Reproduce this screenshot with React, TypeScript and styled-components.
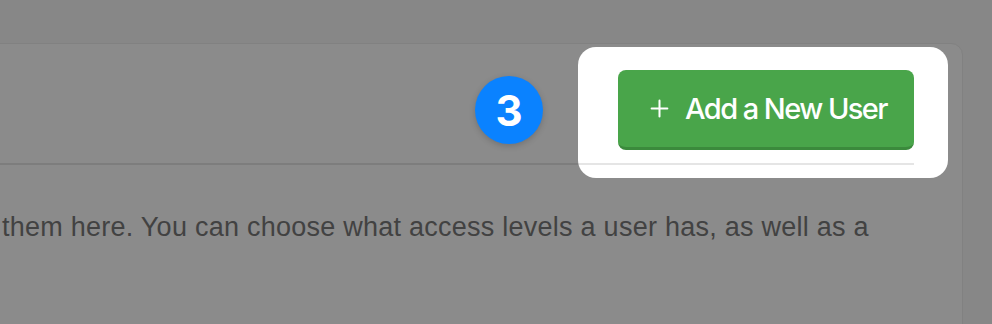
import React from "react";
import styled, { createGlobalStyle } from "styled-components";
import { Plus } from "lucide-react";

const GlobalStyle = createGlobalStyle`
  html, body {
    margin: 0;
    padding: 0;
    background: #f7f7f7;
    overflow: hidden;
  }
  body {
    font-family: Inter, "Liberation Sans", Arial, sans-serif;
  }
`;

const Page = styled.div`
  height: 324px;
  padding-top: 43px;
  box-sizing: border-box;
  overflow: hidden;
`;

const Card = styled.section`
  margin-left: -60px;
  width: 1023px;
  height: 320px;
  background: #ffffff;
  border: 1px solid #ececec;
  border-radius: 12px;
  box-sizing: border-box;
`;

const Header = styled.header`
  display: flex;
  justify-content: flex-end;
  align-items: center;
  margin-right: 48px;
  padding: 26px 0 13px;
  border-bottom: 2px solid #e5e5e5;
`;

const ButtonWrap = styled.div`
  position: relative;
`;

const Spotlight = styled.div`
  position: absolute;
  top: -23px;
  bottom: -28px;
  left: -40px;
  right: -34px;
  border-radius: 18px;
  box-shadow: 0 0 0 2000px rgba(0, 0, 0, 0.455);
  pointer-events: none;
  z-index: 1;
`;

const StepBadge = styled.div`
  position: absolute;
  right: calc(100% + 75px);
  top: 50%;
  transform: translateY(-50%);
  width: 68px;
  height: 68px;
  border-radius: 50%;
  background: #0a82ff;
  color: #fff;
  display: flex;
  align-items: center;
  justify-content: center;
  font-family: Inter, "Liberation Sans", Arial, sans-serif;
  font-weight: 700;
  font-size: 42px;
  box-shadow: 0 2px 6px rgba(0, 0, 0, 0.18);
  z-index: 2;
`;

const AddButton = styled.button`
  display: flex;
  align-items: center;
  gap: 12px;
  width: 296px;
  height: 80px;
  padding: 0 0 0 28px;
  background: #49a54a;
  border: none;
  border-bottom: 3px solid #3b8a3c;
  border-radius: 8px;
  color: #fff;
  font-family: Inter, "Liberation Sans", Arial, sans-serif;
  font-size: 29px;
  font-weight: 500;
  letter-spacing: -1.55px;
  white-space: nowrap;
  box-sizing: border-box;
  cursor: pointer;
`;

const Body = styled.div`
  padding: 43px 0 0 61px;
  color: #7a7a7a;
  font-family: "Liberation Sans", Arial, sans-serif;
  font-size: 27px;
  letter-spacing: 0.25px;
  line-height: 38px;
  white-space: nowrap;
`;

export default function App() {
  return (
    <>
      <GlobalStyle />
      <Page>
        <Card>
          <Header>
            <ButtonWrap>
              <StepBadge>3</StepBadge>
              <Spotlight />
              <AddButton>
                <Plus size={27} strokeWidth={1.8} />
                Add a New User
              </AddButton>
            </ButtonWrap>
          </Header>
          <Body>
            them here. You can choose what access levels a user has, as well as a
          </Body>
        </Card>
      </Page>
    </>
  );
}
